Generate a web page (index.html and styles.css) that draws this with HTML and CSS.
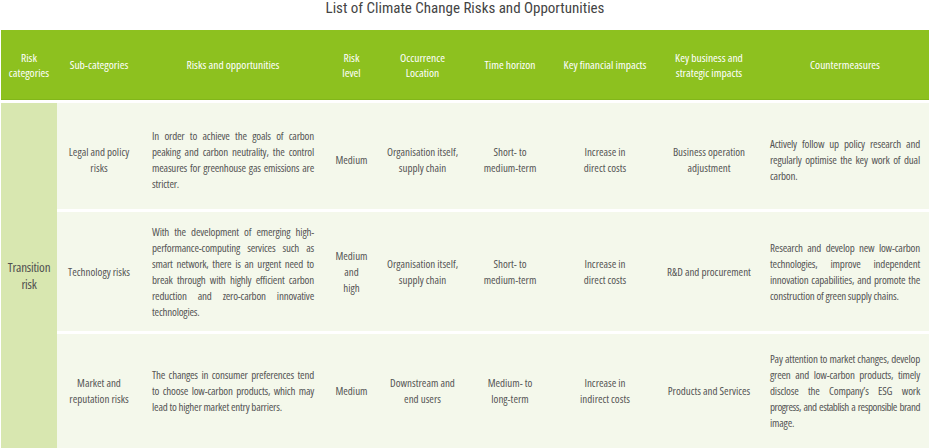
FILE: index.html
```html
<!DOCTYPE html>
<html lang="en">
<head>
<meta charset="utf-8">
<title>List of Climate Change Risks and Opportunities</title>
<link rel="stylesheet" href="styles.css">
</head>
<body>
<h1 class="title">List of Climate Change Risks and Opportunities</h1>
<table class="risks">
  <colgroup>
    <col class="c-cat"><col class="c-sub"><col class="c-ro"><col class="c-lvl"><col class="c-loc"><col class="c-time"><col class="c-fin"><col class="c-biz"><col class="c-cm">
  </colgroup>
  <thead>
    <tr>
      <th>Risk<br>categories</th>
      <th>Sub-categories</th>
      <th>Risks and opportunities</th>
      <th>Risk<br>level</th>
      <th>Occurrence<br>Location</th>
      <th>Time horizon</th>
      <th>Key financial impacts</th>
      <th>Key business and<br>strategic impacts</th>
      <th>Countermeasures</th>
    </tr>
  </thead>
  <tbody>
    <tr class="row-1">
      <td class="cat" rowspan="3">Transition<br>risk</td>
      <td class="lower">Legal and policy<br>risks</td>
      <td class="text lower">
        <span class="ln">In order to achieve the goals of carbon</span>
        <span class="ln">peaking and carbon neutrality, the control</span>
        <span class="ln">measures for greenhouse gas emissions are</span>
        <span class="ln last">stricter.</span>
      </td>
      <td class="lower">Medium</td>
      <td class="lower">Organisation itself,<br>supply chain</td>
      <td class="lower">Short- to<br>medium-term</td>
      <td class="lower">Increase in<br>direct costs</td>
      <td class="lower">Business operation<br>adjustment</td>
      <td class="text cm lower">
        <span class="ln">Actively follow up policy research and</span>
        <span class="ln">regularly optimise the key work of dual</span>
        <span class="ln last">carbon.</span>
      </td>
    </tr>
    <tr class="row-2">
      <td>Technology risks</td>
      <td class="text">
        <span class="ln">With the development of emerging high-</span>
        <span class="ln">performance-computing services such as</span>
        <span class="ln">smart network, there is an urgent need to</span>
        <span class="ln">break through with highly efficient carbon</span>
        <span class="ln">reduction and zero-carbon innovative</span>
        <span class="ln last">technologies.</span>
      </td>
      <td>Medium<br>and<br>high</td>
      <td>Organisation itself,<br>supply chain</td>
      <td>Short- to<br>medium-term</td>
      <td>Increase in<br>direct costs</td>
      <td>R&amp;D and procurement</td>
      <td class="text cm">
        <span class="ln">Research and develop new low-carbon</span>
        <span class="ln">technologies, improve independent</span>
        <span class="ln">innovation capabilities, and promote the</span>
        <span class="ln last">construction of green supply chains.</span>
      </td>
    </tr>
    <tr class="row-3">
      <td>Market and<br>reputation risks</td>
      <td class="text">
        <span class="ln">The changes in consumer preferences tend</span>
        <span class="ln">to choose low-carbon products, which may</span>
        <span class="ln last">lead to higher market entry barriers.</span>
      </td>
      <td>Medium</td>
      <td>Downstream and<br>end users</td>
      <td>Medium- to<br>long-term</td>
      <td>Increase in<br>indirect costs</td>
      <td>Products and Services</td>
      <td class="text cm">
        <span class="ln">Pay attention to market changes, develop</span>
        <span class="ln">green and low-carbon products, timely</span>
        <span class="ln">disclose the Company’s ESG work</span>
        <span class="ln tight">progress, and establish a responsible brand</span>
        <span class="ln last">image.</span>
      </td>
    </tr>
  </tbody>
</table>
</body>
</html>
```

FILE: styles.css
```css
html, body {
  margin: 0;
  padding: 0;
  background: #ffffff;
}

body {
  font-family: "Open Sans", "Roboto Condensed", "Liberation Sans", sans-serif;
  font-stretch: 75%;
  color: #555555;
  overflow: hidden;
}

.title {
  margin: 0 0 14px 0;
  height: 16px;
  font-family: "Roboto Condensed", "Open Sans", sans-serif;
  font-stretch: normal;
  font-size: 15px;
  line-height: 16px;
  font-weight: normal;
  text-align: center;
  color: #444444;
}

.risks {
  margin-left: 1px;
  width: 928px;
  table-layout: fixed;
  border-collapse: separate;
  border-spacing: 0;
  font-size: 11px;
  line-height: 16px;
}

.c-cat { width: 56px; }
.c-sub { width: 84px; }
.c-ro { width: 184px; }
.c-lvl { width: 53px; }
.c-loc { width: 89px; }
.c-time { width: 86px; }
.c-fin { width: 104px; }
.c-biz { width: 104px; }
.c-cm { width: 168px; }

.risks th {
  height: 69px;
  padding: 0 2px;
  background: #8dc11f;
  border-bottom: 1px solid #82b61a;
  color: #ffffff;
  font-size: 11.5px;
  font-weight: 500;
  text-align: center;
  vertical-align: middle;
  line-height: 15px;
  white-space: nowrap;
}

.risks td {
  padding: 0 2px;
  background: #f4f8eb;
  border-top: 3px solid #ffffff;
  text-align: center;
  vertical-align: middle;
  white-space: nowrap;
}

.row-1 td { height: 106px; }
.row-2 td { height: 119px; }
.row-3 td { height: 114px; }

.row-1 td.lower {
  height: 99px;
  padding-top: 7px;
}

.risks td.cat {
  background: #d8e7b0;
  font-size: 13px;
  line-height: 17px;
  letter-spacing: -0.2px;
  color: #4f4f4f;
}

.risks td.text {
  padding-left: 11px;
  padding-right: 11px;
  white-space: normal;
}

.risks td.cm {
  padding-left: 9px;
  padding-right: 9px;
}

.ln {
  display: block;
  text-align: justify;
  text-align-last: justify;
  white-space: nowrap;
  letter-spacing: -0.2px;
}

.ln.last {
  text-align-last: left;
}

.ln.tight {
  letter-spacing: -0.45px;
  word-spacing: -1px;
}
```
